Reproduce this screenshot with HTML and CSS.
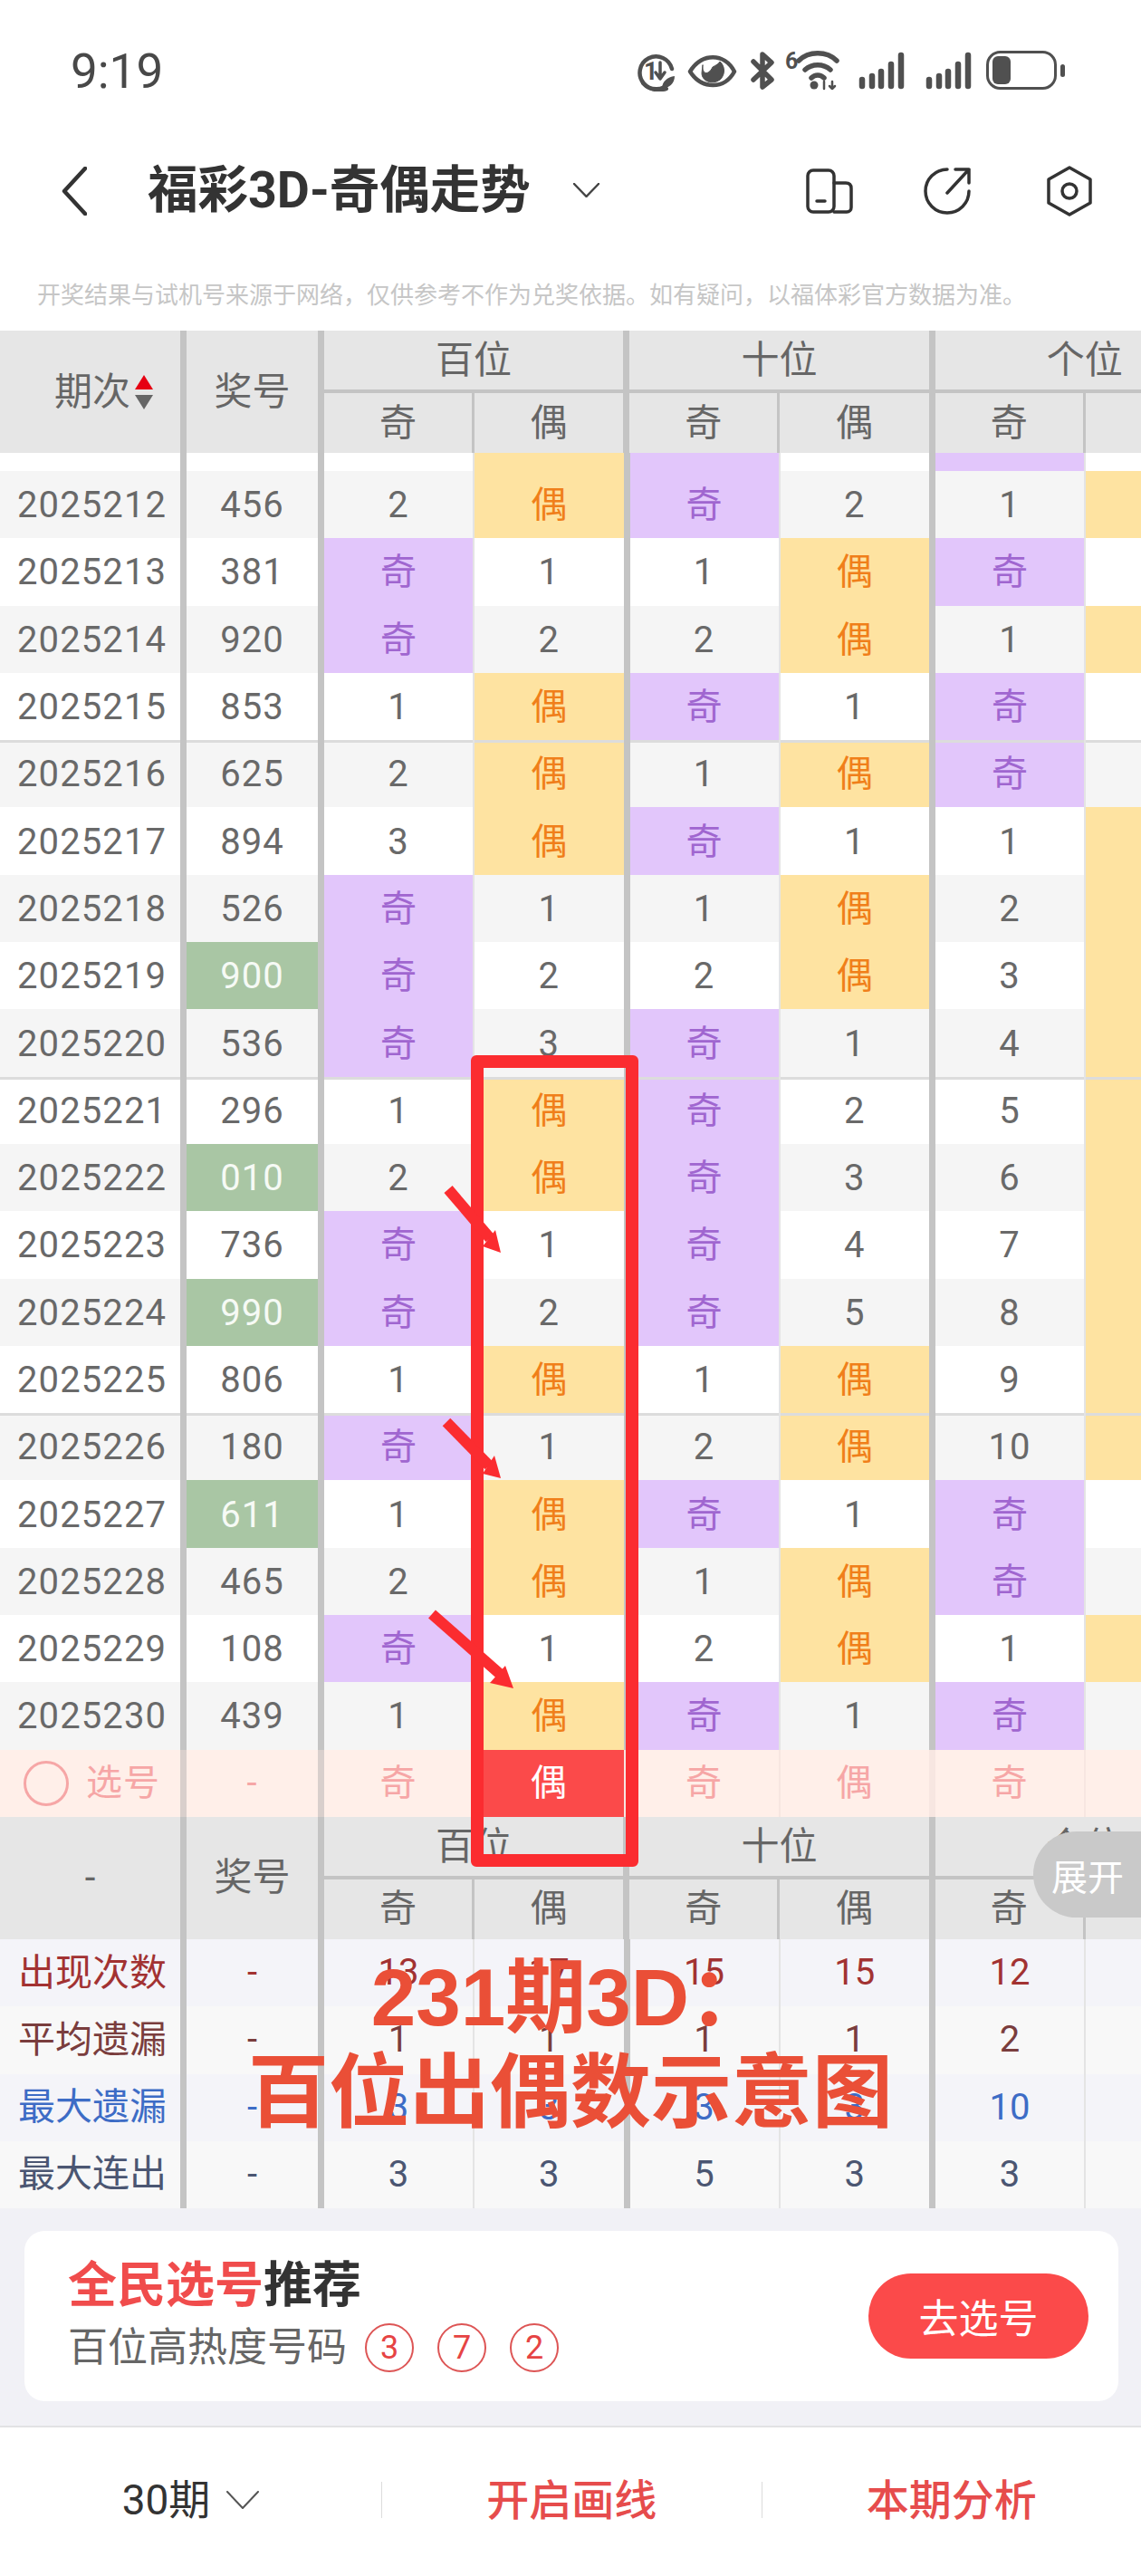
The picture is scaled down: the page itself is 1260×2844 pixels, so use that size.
FILE: index.html
```html
<!DOCTYPE html>
<html lang="zh-CN">
<head>
<meta charset="utf-8">
<title>福彩3D-奇偶走势</title>
<link rel="stylesheet" href="styles.css">
</head>
<body>
<div class="page">
  <header class="status">
    <span class="time">9:19</span>
    <svg class="status-icons" width="475" height="46" viewBox="703 55 475 46" fill="none" stroke="#505050" stroke-linecap="round" stroke-linejoin="round">
      <path d="M739 91A18 18 0 1 1 742 76" stroke-width="4.5"/>
      <path d="M736 98C727 101 716 99 710 92" stroke-width="4"/>
      <path d="M731 98C731 90 737 85 745 84C745 92 739 97 731 98Z" fill="#505050" stroke="none"/>
      <text class="status-num" x="711" y="88" fill="#505050" stroke="none">1</text>
      <path d="M729 69V86M724 80L729 87L734 80" stroke-width="3.5"/>
      <path d="M762 79C775 58 800 58 811 79C800 99 775 99 762 79Z" stroke-width="4.5"/>
      <path d="M776 72C775 82 782 84 787 74C791 72 794 70 795 68C801 73 801 83 795 88C787 94 775 90 775 81Z" fill="#505050" stroke="#505050" stroke-width="1"/>
      <path d="M832 68L852 88L842 96V60L852 69L832 88" stroke-width="5.5"/>
      <text class="status-six" x="867" y="76" fill="#505050" stroke="none">6</text>
      <path d="M882 67C893 56 913 56 924 67M889 77C897 70 909 70 917 77M896 86C900 82 906 82 910 86" stroke-width="5.5"/>
      <circle cx="899" cy="94" r="4.5" fill="#505050" stroke="none"/>
      <path d="M910 90V98M919 90V98M916 95L919 98L922 95" stroke-width="2.5"/>
      <g stroke-width="6.5">
        <path d="M952 88V95M963 84V95M973 79V95M984 71V95M995 61V95"/>
        <path d="M1026 88V95M1037 84V95M1047 79V95M1058 71V95M1069 61V95"/>
      </g>
      <rect x="1090.5" y="57.5" width="75" height="40" rx="14" stroke-width="3"/>
      <rect x="1096" y="62" width="20" height="31" rx="6" fill="#505050" stroke="none"/>
      <rect x="1171" y="71" width="5" height="14" rx="2.5" fill="#505050" stroke="none"/>
    </svg>
  </header>

  <nav class="nav">
    <svg class="nav-back" width="28" height="54" viewBox="0 0 28 54" fill="none" stroke="#333" stroke-width="4.5" stroke-linecap="round" stroke-linejoin="round"><path d="M26 2L3 27L26 52"/></svg>
    <h1 class="nav-title">福彩3D-奇偶走势</h1>
    <svg class="nav-caret" width="29" height="16" viewBox="0 0 29 16" fill="none" stroke="#444" stroke-width="2.5" stroke-linecap="round" stroke-linejoin="round"><path d="M1 1L14.5 15L28 1"/></svg>
    <div class="nav-tools">
      <svg width="52" height="50" viewBox="0 0 52 50" fill="none" stroke="#333" stroke-width="3.5" stroke-linecap="round" stroke-linejoin="round"><rect x="2" y="2" width="29" height="46" rx="6"/><path d="M31 16H44C48 16 50 18 50 22V43C50 46 48 48 45 48H31"/><path d="M12 36H21"/></svg>
      <svg width="52" height="52" viewBox="0 0 52 52" fill="none" stroke="#333" stroke-width="3.5" stroke-linecap="round" stroke-linejoin="round"><path d="M26 2A24 24 0 1 0 50 26"/><path d="M35 2H50V17M50 2L26 28"/></svg>
      <svg width="52" height="56" viewBox="0 0 52 56" fill="none" stroke="#333" stroke-width="3.5" stroke-linecap="round" stroke-linejoin="round"><path d="M26 2L49 15V41L26 54L3 41V15Z"/><circle cx="26" cy="28" r="8"/></svg>
    </div>
  </nav>

  <p class="notice">开奖结果与试机号来源于网络，仅供参考不作为兑奖依据。如有疑问，以福体彩官方数据为准。</p>

  <section class="chart">
    <div class="thead">
      <div class="th th-p">期次<span class="sort"><i class="up"></i><i class="down"></i></span></div>
      <div class="th th-n">奖号</div>
      <div class="grp"><div class="grp-t">百位</div><div class="grp-s"><div>奇</div><div>偶</div></div></div>
      <div class="grp"><div class="grp-t">十位</div><div class="grp-s"><div>奇</div><div>偶</div></div></div>
      <div class="grp"><div class="grp-t">个位</div><div class="grp-s"><div>奇</div><div>偶</div></div></div>
    </div>

    <div class="row partial"><div class="c p"></div><div class="c n"></div><div class="c o"></div><div class="c e he">偶</div><div class="c o ho">奇</div><div class="c e"></div><div class="c o ho">奇</div><div class="c e"></div></div>
    <div class="row alt"><div class="c p">2025212</div><div class="c n">456</div><div class="c o">2</div><div class="c e he">偶</div><div class="c o ho">奇</div><div class="c e">2</div><div class="c o">1</div><div class="c e he"></div></div>
    <div class="row"><div class="c p">2025213</div><div class="c n">381</div><div class="c o ho">奇</div><div class="c e">1</div><div class="c o">1</div><div class="c e he">偶</div><div class="c o ho">奇</div><div class="c e"></div></div>
    <div class="row alt"><div class="c p">2025214</div><div class="c n">920</div><div class="c o ho">奇</div><div class="c e">2</div><div class="c o">2</div><div class="c e he">偶</div><div class="c o">1</div><div class="c e he"></div></div>
    <div class="row"><div class="c p">2025215</div><div class="c n">853</div><div class="c o">1</div><div class="c e he">偶</div><div class="c o ho">奇</div><div class="c e">1</div><div class="c o ho">奇</div><div class="c e"></div></div>
    <div class="row alt five"><div class="c p">2025216</div><div class="c n">625</div><div class="c o">2</div><div class="c e he">偶</div><div class="c o">1</div><div class="c e he">偶</div><div class="c o ho">奇</div><div class="c e"></div></div>
    <div class="row"><div class="c p">2025217</div><div class="c n">894</div><div class="c o">3</div><div class="c e he">偶</div><div class="c o ho">奇</div><div class="c e">1</div><div class="c o">1</div><div class="c e he"></div></div>
    <div class="row alt"><div class="c p">2025218</div><div class="c n">526</div><div class="c o ho">奇</div><div class="c e">1</div><div class="c o">1</div><div class="c e he">偶</div><div class="c o">2</div><div class="c e he"></div></div>
    <div class="row"><div class="c p">2025219</div><div class="c n g">900</div><div class="c o ho">奇</div><div class="c e">2</div><div class="c o">2</div><div class="c e he">偶</div><div class="c o">3</div><div class="c e he"></div></div>
    <div class="row alt"><div class="c p">2025220</div><div class="c n">536</div><div class="c o ho">奇</div><div class="c e">3</div><div class="c o ho">奇</div><div class="c e">1</div><div class="c o">4</div><div class="c e he"></div></div>
    <div class="row five"><div class="c p">2025221</div><div class="c n">296</div><div class="c o">1</div><div class="c e he">偶</div><div class="c o ho">奇</div><div class="c e">2</div><div class="c o">5</div><div class="c e he"></div></div>
    <div class="row alt"><div class="c p">2025222</div><div class="c n g">010</div><div class="c o">2</div><div class="c e he">偶</div><div class="c o ho">奇</div><div class="c e">3</div><div class="c o">6</div><div class="c e he"></div></div>
    <div class="row"><div class="c p">2025223</div><div class="c n">736</div><div class="c o ho">奇</div><div class="c e">1</div><div class="c o ho">奇</div><div class="c e">4</div><div class="c o">7</div><div class="c e he"></div></div>
    <div class="row alt"><div class="c p">2025224</div><div class="c n g">990</div><div class="c o ho">奇</div><div class="c e">2</div><div class="c o ho">奇</div><div class="c e">5</div><div class="c o">8</div><div class="c e he"></div></div>
    <div class="row"><div class="c p">2025225</div><div class="c n">806</div><div class="c o">1</div><div class="c e he">偶</div><div class="c o">1</div><div class="c e he">偶</div><div class="c o">9</div><div class="c e he"></div></div>
    <div class="row alt five"><div class="c p">2025226</div><div class="c n">180</div><div class="c o ho">奇</div><div class="c e">1</div><div class="c o">2</div><div class="c e he">偶</div><div class="c o">10</div><div class="c e he"></div></div>
    <div class="row"><div class="c p">2025227</div><div class="c n g">611</div><div class="c o">1</div><div class="c e he">偶</div><div class="c o ho">奇</div><div class="c e">1</div><div class="c o ho">奇</div><div class="c e"></div></div>
    <div class="row alt"><div class="c p">2025228</div><div class="c n">465</div><div class="c o">2</div><div class="c e he">偶</div><div class="c o">1</div><div class="c e he">偶</div><div class="c o ho">奇</div><div class="c e"></div></div>
    <div class="row"><div class="c p">2025229</div><div class="c n">108</div><div class="c o ho">奇</div><div class="c e">1</div><div class="c o">2</div><div class="c e he">偶</div><div class="c o">1</div><div class="c e he"></div></div>
    <div class="row alt"><div class="c p">2025230</div><div class="c n">439</div><div class="c o">1</div><div class="c e he">偶</div><div class="c o ho">奇</div><div class="c e">1</div><div class="c o ho">奇</div><div class="c e"></div></div>

    <div class="row pick">
      <div class="c p"><span class="pick-dot"></span>选号</div><div class="c n">-</div>
      <div class="c o">奇</div><div class="c e sel">偶</div><div class="c o">奇</div><div class="c e">偶</div><div class="c o">奇</div><div class="c e"></div>
    </div>

    <div class="thead">
      <div class="th th-dash">-</div>
      <div class="th th-n">奖号</div>
      <div class="grp"><div class="grp-t">百位</div><div class="grp-s"><div>奇</div><div>偶</div></div></div>
      <div class="grp"><div class="grp-t">十位</div><div class="grp-s"><div>奇</div><div>偶</div></div></div>
      <div class="grp"><div class="grp-t">个位</div><div class="grp-s"><div>奇</div><div>偶</div></div></div>
    </div>

    <div class="row stat s-count"><div class="c p">出现次数</div><div class="c n">-</div><div class="c o">13</div><div class="c e">17</div><div class="c o">15</div><div class="c e">15</div><div class="c o">12</div><div class="c e"></div></div>
    <div class="row stat s-avg alt"><div class="c p">平均遗漏</div><div class="c n">-</div><div class="c o">1</div><div class="c e">1</div><div class="c o">1</div><div class="c e">1</div><div class="c o">2</div><div class="c e"></div></div>
    <div class="row stat s-max"><div class="c p">最大遗漏</div><div class="c n">-</div><div class="c o">3</div><div class="c e">3</div><div class="c o">3</div><div class="c e">3</div><div class="c o">10</div><div class="c e"></div></div>
    <div class="row stat s-run alt"><div class="c p">最大连出</div><div class="c n">-</div><div class="c o">3</div><div class="c e">3</div><div class="c o">5</div><div class="c e">3</div><div class="c o">3</div><div class="c e"></div></div>
  </section>

  <section class="rec">
    <div class="rec-text">
      <h2 class="rec-title"><em>全民选号</em>推荐</h2>
      <div class="rec-sub">百位高热度号码<span class="ball">3</span><span class="ball">7</span><span class="ball">2</span></div>
    </div>
    <button class="rec-btn">去选号</button>
  </section>

  <footer class="bar">
    <div class="bar-item bar-range">30期<svg width="36" height="20" viewBox="0 0 36 20" fill="none" stroke="#555" stroke-width="2" stroke-linecap="round" stroke-linejoin="round"><path d="M1 1L18 19L35 1"/></svg></div>
    <div class="bar-item bar-link">开启画线</div>
    <div class="bar-item bar-link">本期分析</div>
  </footer>

  <div class="expand">展开</div>
  <div class="mark-box"></div>
  <svg class="mark-arrows" width="120" height="600" viewBox="470 1300 120 600">
    <g stroke="#fb2c30" stroke-width="12" fill="#fb2c30">
      <path d="M495 1313L541 1367"/>
      <path d="M493 1570L540 1618"/>
      <path d="M477 1782L553 1849"/>
    </g>
    <g fill="#fb2c30">
      <path d="M553 1383L547 1358L533 1376Z"/>
      <path d="M553 1632L546 1607L533 1627Z"/>
      <path d="M567 1864L558 1839L541 1858Z"/>
    </g>
  </svg>
  <div class="mark-text">231期3D：<br>百位出偶数示意图</div>
</div>
</body>
</html>
```
FILE: styles.css
```css
* { box-sizing: border-box; }
html, body { margin: 0; padding: 0; }
body { background: #fff; }

.page {
  position: relative;
  width: 1260px;
  height: 2844px;
  overflow: hidden;
  background: #f1f1f6;
  font-family: Roboto, "Noto Sans CJK SC", sans-serif;
  color: #666;
}

/* status bar */
.status {
  height: 134px;
  padding: 55px 82px 0 78px;
  display: flex;
  justify-content: space-between;
  align-items: flex-start;
  background: #fff;
}
.time { font-size: 53px; line-height: 48px; color: #484848; }
.status-num { font: 700 27px Roboto, sans-serif; }
.status-six { font: 700 25px Roboto, sans-serif; }

/* nav */
.nav {
  height: 154px;
  padding: 0 53px 0 68px;
  display: flex;
  align-items: center;
  background: #fff;
}
.nav-title {
  margin: 0 0 0 67px;
  font-size: 55.5px;
  line-height: 1;
  font-weight: 700;
  color: #333;
  white-space: nowrap;
}
.nav-caret { margin-left: 47px; margin-top: -2px; }
.nav-tools { margin-left: auto; display: flex; align-items: center; gap: 83px; }
.nav-tools svg:first-child { margin-right: -5px; }

.notice {
  height: 77px;
  margin: 0;
  padding-left: 41px;
  background: #fff;
  font-size: 26px;
  line-height: 76px;
  color: #c6c6c6;
  white-space: nowrap;
}

/* chart */
.chart { width: 1260px; overflow: hidden; }

.thead {
  display: flex;
  width: 1370px;
  height: 135px;
  background: #e6e6e6;
  font-size: 42px;
  line-height: 1;
}
.th {
  display: flex;
  align-items: center;
  justify-content: center;
  border-right: 7px solid #c4c4c4;
}
.th-p { width: 206px; padding-left: 30px; }
.th-dash { width: 206px; }
.th-n { width: 152px; }
.sort { display: inline-flex; flex-direction: column; gap: 6px; margin-left: 5px; }
.sort i { display: block; width: 0; height: 0; border-left: 10px solid transparent; border-right: 10px solid transparent; }
.sort .up { border-bottom: 16px solid #e60012; }
.sort .down { border-top: 16px solid #666; }

.grp { width: 337.5px; border-right: 7px solid #c4c4c4; }
.grp-t {
  height: 69px;
  padding-top: 1px;
  display: flex;
  align-items: center;
  justify-content: center;
  border-bottom: 4px solid #c4c4c4;
}
.grp-s { display: flex; height: 66px; font-size: 41px; }
.grp-s div { display: flex; align-items: center; justify-content: center; }
.grp-s div:first-child { width: 166px; border-right: 3px solid #c4c4c4; }
.grp-s div:last-child { flex: 1; }

.row {
  display: grid;
  grid-template-columns: 206px 152px 166px 171.5px 166px 171.5px 166px 171.5px;
  width: 1371px;
  height: 74.3px;
  background: #fff;
  font-size: 40px;
  line-height: 1;
  letter-spacing: 1.1px;
}
.row.alt { background: #f5f5f5; }
.c {
  display: flex;
  align-items: center;
  justify-content: center;
  height: 100%;
  padding-top: 2px;
  color: #696969;
  white-space: nowrap;
}
.p, .n, .e { border-right: 7px solid #c4c4c4; }
.o { border-right: 2px solid #e4e4e4; }
.p { justify-content: flex-start; padding-left: 19px; }
.he { background: #fee3a1; color: #f07f1a; letter-spacing: 0; }
.ho { background: #e2c6fb; color: #a066d0; letter-spacing: 0; }
.g { background: #a9c6a4; color: #f6faf5; }
.five .c { box-shadow: inset 0 3px 0 #dcdcdc; }

.partial { height: 20px; overflow: hidden; }
.partial .c { height: 74.3px; margin-top: -54.3px; padding-top: 0; }

/* pick row */
.pick { background: #ffefe9; }
.pick .c { color: #f6a6a6; border-right-color: #f7e6e1; padding-top: 0; }
.pick .p, .pick .n { border-right-color: #d9cfcc; }
.pick .n { color: #f6a6a6; }
.pick .sel { background: #fb4a4a; color: #fff; }
.pick-dot {
  width: 50px;
  height: 50px;
  margin: 0 19px 0 6px;
  border: 3px solid #f6a6a6;
  border-radius: 50%;
  flex: none;
}
.pick .p { padding-left: 20px; }

/* stats */
.stat { background: #f4f4f9; letter-spacing: 0; }
.stat.alt { background: #f8f8f8; }
.stat .c { padding-top: 0; }
.stat .p { padding-left: 20px; font-size: 41px; }
.s-count .c { color: #a23232; }
.s-avg .c { color: #7a3d3d; }
.s-max .c { color: #3d6cc6; }
.s-run .c { color: #4b5672; }

/* recommendation card */
.rec {
  height: 188px;
  margin: 25px 25px 27px 27px;
  padding: 0 33px 0 48px;
  display: flex;
  align-items: center;
  justify-content: space-between;
  background: #fff;
  border-radius: 22px;
}
.rec-title {
  margin: -2px 0 0;
  font-size: 54px;
  line-height: 62px;
  font-weight: 700;
  color: #333;
}
.rec-title em { font-style: normal; color: #f04c4c; }
.rec-sub {
  margin-top: 10px;
  display: flex;
  align-items: center;
  font-size: 44px;
  line-height: 54px;
  color: #666;
  white-space: nowrap;
}
.ball {
  width: 54px;
  height: 54px;
  margin-left: 26px;
  display: flex;
  align-items: center;
  justify-content: center;
  border: 2px solid #dd5555;
  border-radius: 50%;
  font-size: 36px;
  line-height: 1;
  color: #e64444;
}
.rec-sub .ball:first-of-type { margin-left: 20px; }
.rec-btn {
  width: 243px;
  height: 94px;
  padding: 0;
  border: 0;
  border-radius: 47px;
  background: #fb4a4a;
  font: 44px Roboto, "Noto Sans CJK SC", sans-serif;
  color: #fff;
}

/* bottom bar */
.bar {
  height: 166px;
  padding-bottom: 4px;
  display: flex;
  align-items: center;
  background: #fff;
  border-top: 2px solid #e2e2e4;
}
.bar-item {
  flex: 1;
  height: 40px;
  display: flex;
  align-items: center;
  justify-content: center;
  font-size: 47px;
  line-height: 1;
}
.bar-item + .bar-item { border-left: 1px solid #dcdcdc; }
.bar-range { flex: none; width: 421px; color: #333; gap: 18px; font-size: 46px; }
.bar-link { color: #e64c4c; font-weight: 500; }

/* overlays */
.expand {
  position: absolute;
  right: 0;
  top: 2022px;
  width: 119px;
  height: 95px;
  padding-left: 20px;
  display: flex;
  align-items: center;
  border-radius: 48px 0 0 48px;
  background: #c9c9c9;
  font-size: 40px;
  color: #fff;
}
.mark-box {
  position: absolute;
  left: 520px;
  top: 1165px;
  width: 185px;
  height: 896px;
  border: 14px solid #fb2c30;
  border-radius: 6px;
}
.mark-arrows { position: absolute; left: 470px; top: 1300px; }
.mark-text {
  position: absolute;
  left: 0;
  top: 2153px;
  width: 1260px;
  text-align: center;
  font-size: 89px;
  line-height: 105px;
  font-weight: 700;
  font-family: "Liberation Sans", "Noto Sans CJK SC", sans-serif;
  color: #ea4f37;
}
```
